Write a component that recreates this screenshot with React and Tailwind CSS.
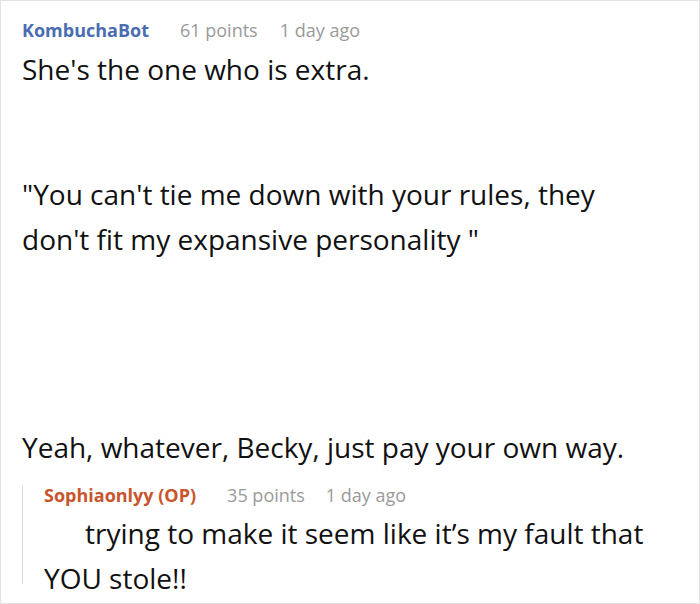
export default function App() {
  return (
    <div
      className="w-[700px] h-[604px] overflow-hidden bg-white border border-[#e3e3e3] pl-[21px] pr-2 text-[#111]"
      style={{ fontFamily: '"Open Sans", "Noto Sans", sans-serif' }}
    >
      <div className="pt-[17px] flex items-center text-[18px] leading-[24px]">
        <span className="font-bold text-[#4a6db1] mr-[31px]">KombuchaBot</span>
        <span className="text-[#9a9a9a] mr-[22px]">61 points</span>
        <span className="text-[#9a9a9a]">1 day ago</span>
      </div>

      <div className="text-[28px] leading-[45px]">
        <p className="mt-[5px]">She's the one who is extra.</p>
        <p className="mt-[80px]">
          "You can't tie me down with your rules, they
          <br />
          don't fit my expansive personality "
        </p>
        <p className="mt-[163px]">Yeah, whatever, Becky, just pay your own way.</p>
      </div>

      <div className="mt-[16px] h-[98px] border-l border-[#dcdcdc] pl-[21px]">
        <div className="flex items-center text-[18px] leading-[18px] font-stretch-[95%]">
          <span className="font-bold text-[#c9552c] mr-[31px]">Sophiaonlyy (OP)</span>
          <span className="text-[#9a9a9a] mr-[21px]">35 points</span>
          <span className="text-[#9a9a9a]">1 day ago</span>
        </div>
        <p className="mt-[7px] text-[28px] leading-[45px] indent-[41px] font-stretch-[92%] whitespace-nowrap">
          trying to make it seem like it’s my fault that
          <br />
          YOU stole!!
        </p>
      </div>
    </div>
  );
}
